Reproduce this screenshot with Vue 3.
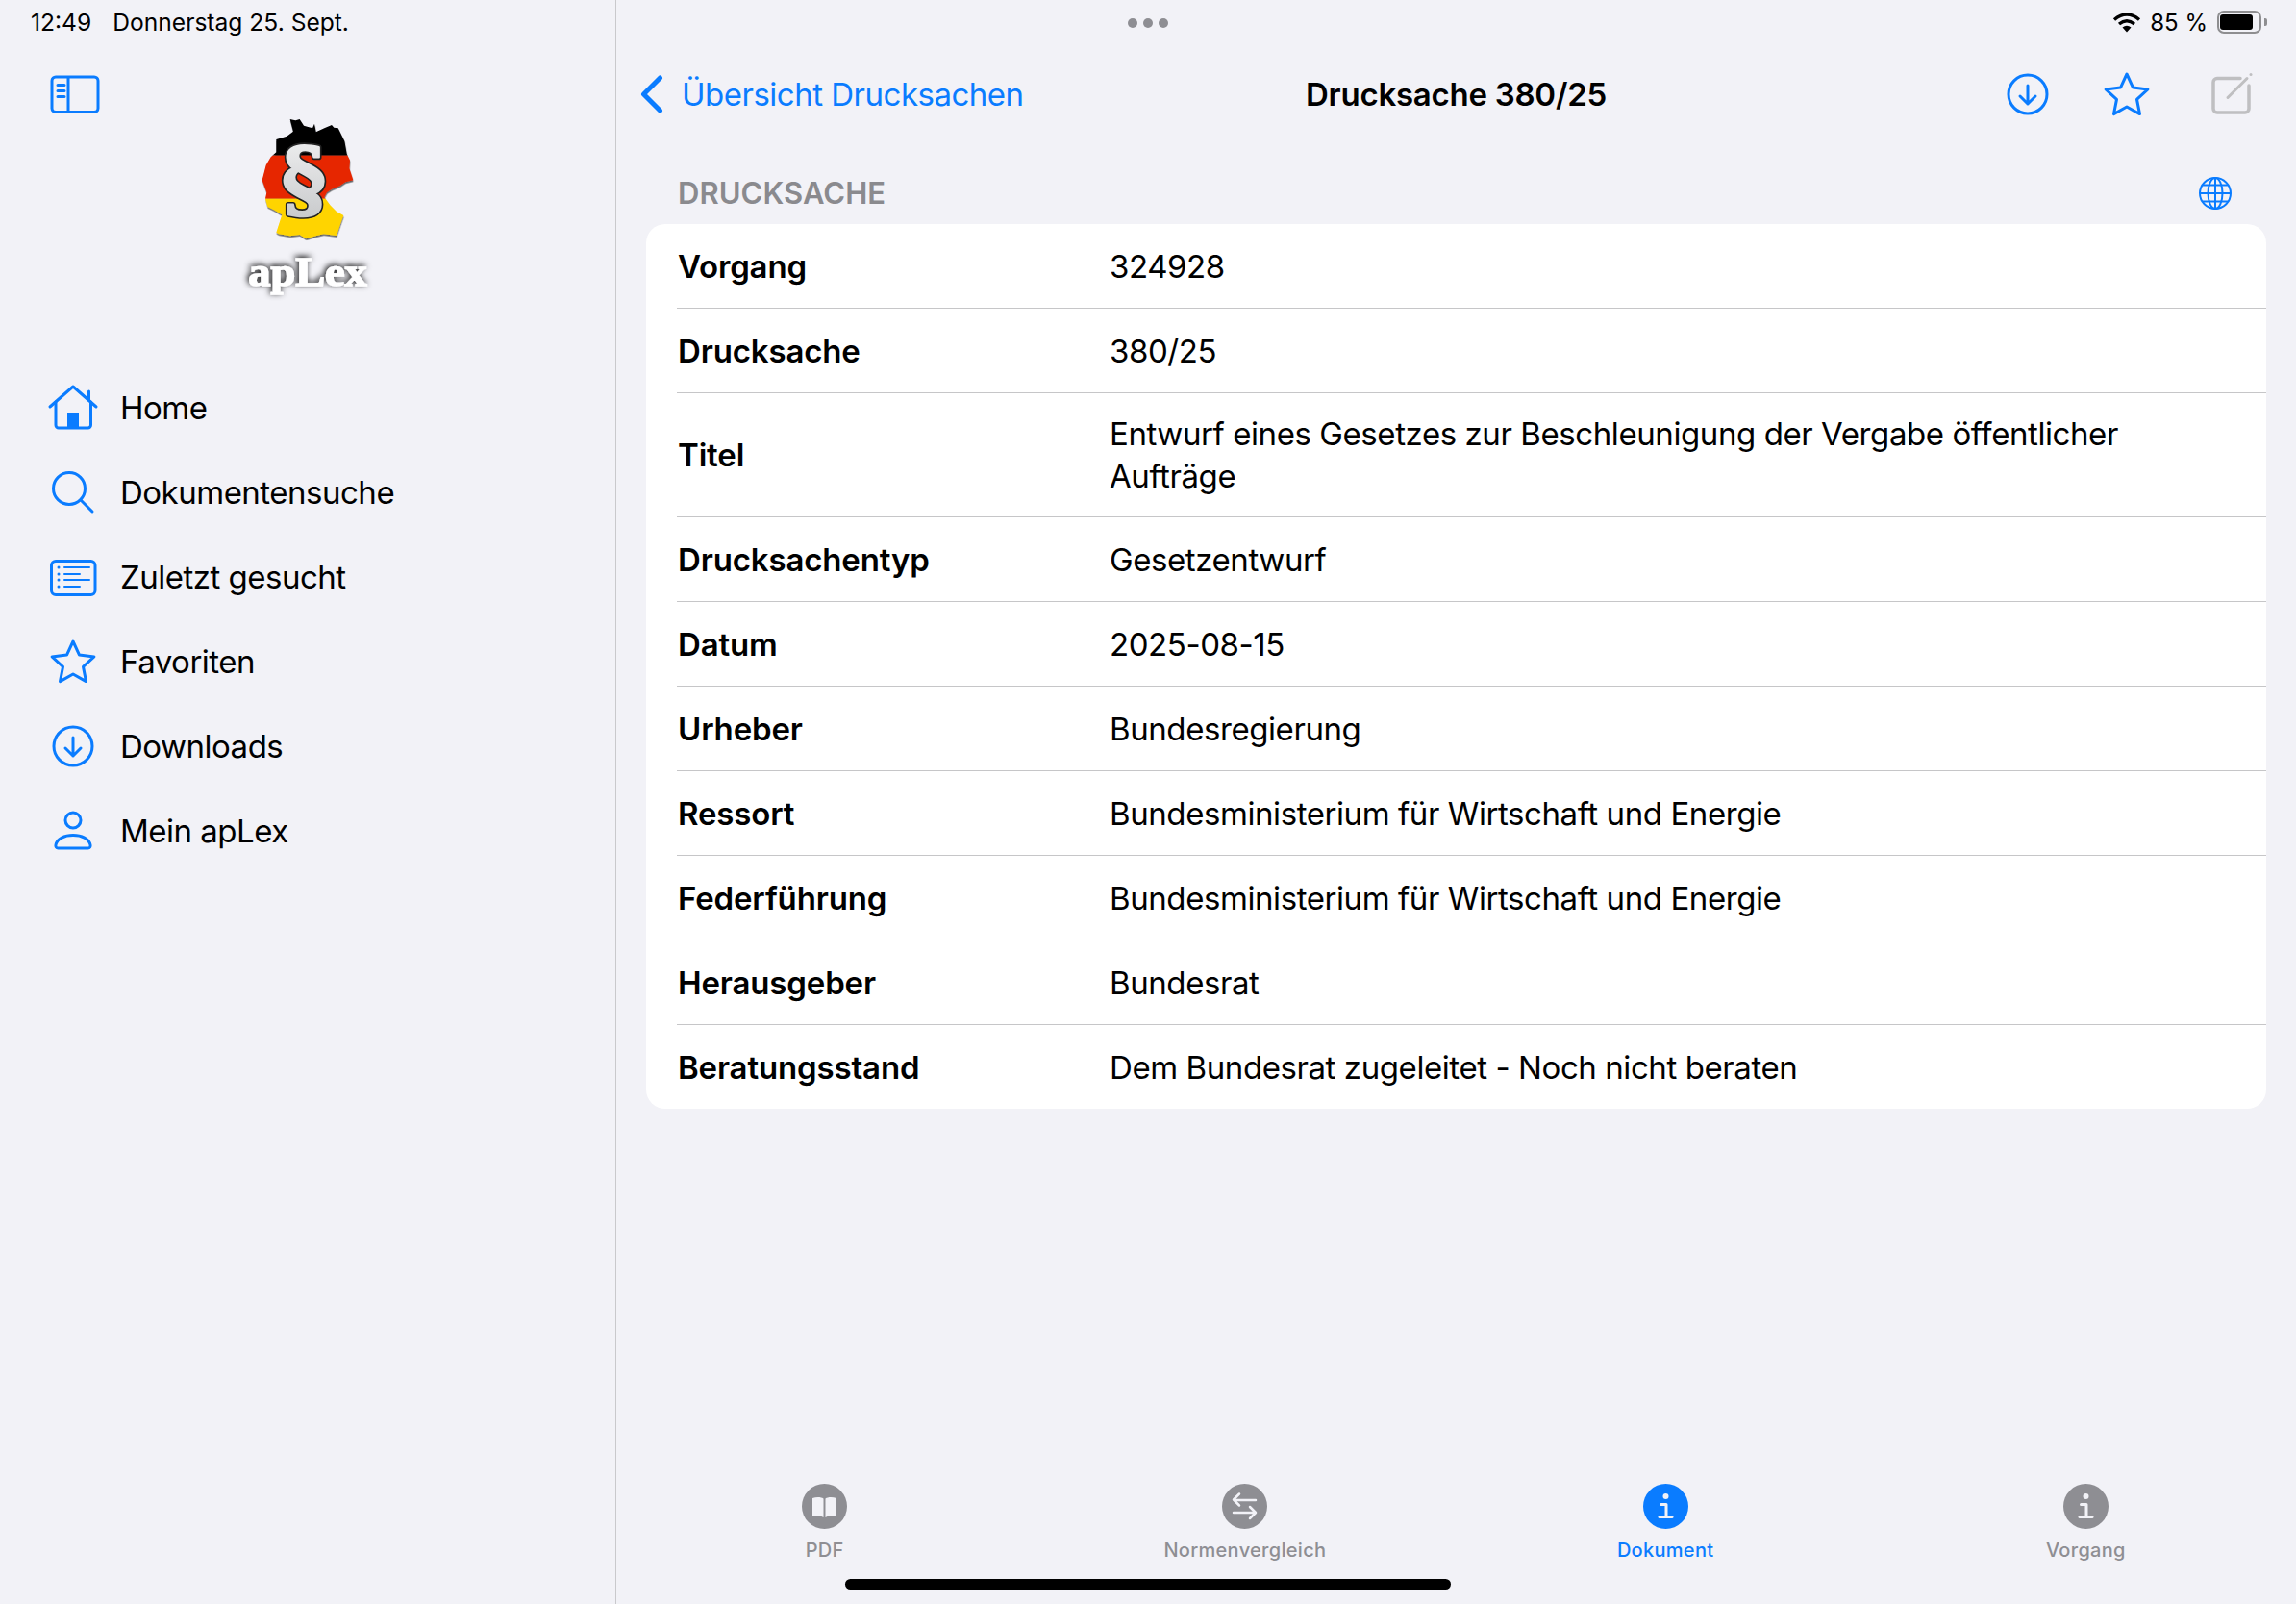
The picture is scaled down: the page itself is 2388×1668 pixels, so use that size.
<script setup>
const rows = [
  { label: 'Vorgang', value: '324928' },
  { label: 'Drucksache', value: '380/25' },
  { label: 'Titel', value: 'Entwurf eines Gesetzes zur Beschleunigung der Vergabe öffentlicher Aufträge' },
  { label: 'Drucksachentyp', value: 'Gesetzentwurf' },
  { label: 'Datum', value: '2025-08-15' },
  { label: 'Urheber', value: 'Bundesregierung' },
  { label: 'Ressort', value: 'Bundesministerium für Wirtschaft und Energie' },
  { label: 'Federführung', value: 'Bundesministerium für Wirtschaft und Energie' },
  { label: 'Herausgeber', value: 'Bundesrat' },
  { label: 'Beratungsstand', value: 'Dem Bundesrat zugeleitet - Noch nicht beraten' }
];

const menu = ['Home', 'Dokumentensuche', 'Zuletzt gesucht', 'Favoriten', 'Downloads', 'Mein apLex'];

const tabs = [
  { label: 'PDF', icon: 'book' },
  { label: 'Normenvergleich', icon: 'arrows' },
  { label: 'Dokument', icon: 'info', active: true },
  { label: 'Vorgang', icon: 'info' }
];

const germany = '215,72 232,76 245,72 258,92 285,100 291,86 296,112 322,100 345,90 352,98 365,100 385,140 392,180 402,200 400,225 412,262 388,268 370,280 345,290 330,300 322,315 340,340 360,360 382,372 372,400 360,435 320,430 295,436 265,445 245,432 215,436 180,430 172,425 190,370 165,355 145,345 138,320 142,300 128,262 140,215 155,190 172,175 172,135 205,125 225,110';
</script>

<template>
  <div class="page">
    <aside class="sidebar">
      <div class="status-left">
        <span>12:49</span>
        <span>Donnerstag 25. Sept.</span>
      </div>
      <div class="toggle-row">
        <svg class="toggle" width="52" height="41" viewBox="0 0 52 41" fill="none" stroke="#0a7cff" stroke-width="3">
          <rect x="2" y="2" width="48" height="36.5" rx="4" />
          <path d="M19 2V38.5" />
          <path d="M8 10.5h7M8 16.5h7M8 22.5h7" stroke-linecap="round" />
        </svg>
      </div>
      <svg class="logo" width="180" height="200" viewBox="0 60 540 600">
        <defs>
          <clipPath id="de"><polygon :points="germany" /></clipPath>
          <linearGradient id="silver" x1="0" y1="0" x2="0" y2="1">
            <stop offset="0" stop-color="#f2f2f3" />
            <stop offset="1" stop-color="#c4c6c8" />
          </linearGradient>
          <filter id="drop" x="-20%" y="-20%" width="140%" height="140%">
            <feDropShadow dx="1" dy="5" stdDeviation="2" flood-color="#000" flood-opacity="0.6" />
          </filter>
          <filter id="glow" x="-30%" y="-60%" width="160%" height="220%">
            <feDropShadow dx="-4" dy="-5" stdDeviation="10" flood-color="#000" flood-opacity="0.95" />
          </filter>
        </defs>
        <g filter="url(#drop)">
          <g clip-path="url(#de)">
            <rect x="100" y="60" width="340" height="125" fill="#000" />
            <rect x="100" y="185" width="340" height="135" fill="#e62600" />
            <rect x="100" y="320" width="340" height="130" fill="#ffd400" />
          </g>
        </g>
        <text x="258" y="350" text-anchor="middle" class="para" fill="#222" stroke="#222" stroke-width="17" stroke-linejoin="round">§</text>
        <text x="258" y="350" text-anchor="middle" class="para" fill="url(#silver)" stroke="url(#silver)" stroke-width="7" stroke-linejoin="round">§</text>
        <text x="270" y="592" text-anchor="middle" textLength="370" lengthAdjust="spacingAndGlyphs" class="brand" fill="#fff" stroke="#fff" stroke-width="4" filter="url(#glow)">apLex</text>
      </svg>

      <nav class="menu">
        <div v-for="(item, i) in menu" :key="item" class="menu-item">
          <svg width="60" height="60" viewBox="0 0 60 60" fill="none" stroke="#0a7cff" stroke-width="3" stroke-linecap="round" stroke-linejoin="round">
            <template v-if="i === 0">
              <path d="M6 29L30 8L54 29" />
              <path d="M46.5 22V13" />
              <path d="M12 24V48a3 3 0 0 0 3 3H45.5a3 3 0 0 0 3-3V24" />
              <rect x="24" y="35" width="12" height="16" fill="#0a7cff" stroke="none" />
            </template>
            <template v-else-if="i === 1">
              <circle cx="26" cy="26" r="16.5" />
              <path d="M38 38L50 50" />
            </template>
            <template v-else-if="i === 2">
              <rect x="7.5" y="13.5" width="45.5" height="35" rx="4.5" />
              <path d="M21 20H47M21 27H37M21 33H47M21 40H37" stroke-width="2" />
              <path d="M15 20v.1M15 27v.1M15 33v.1M15 40v.1" />
            </template>
            <template v-else-if="i === 3">
              <polygon points="30,9 36.5,23.1 51.9,24.9 40.5,35.4 43.5,50.6 30,43 16.5,50.6 19.5,35.4 8.1,24.9 23.5,23.1" />
            </template>
            <template v-else-if="i === 4">
              <circle cx="30" cy="30" r="20" />
              <path d="M30 21V40M22 32L30 40L38 32" />
            </template>
            <template v-else>
              <circle cx="30" cy="19" r="8" />
              <path d="M14.5 48C12.5 48 11.5 46.5 12 44.5C13.5 38 21 34.5 30 34.5C39 34.5 46.5 38 48 44.5C48.5 46.5 47.5 48 45.5 48Z" />
            </template>
          </svg>
          <span>{{ item }}</span>
        </div>
      </nav>
    </aside>

    <main class="content">
      <div class="status-right">
        <svg width="30" height="21" viewBox="0 0 30 21" fill="none" stroke="#000" stroke-width="3.4">
          <path d="M2 7.5Q15 -3.5 28 7.5" />
          <path d="M7 12Q15 5.5 23 12" />
          <path d="M10.5 15.5Q15 12 19.5 15.5L15 20.5Z" fill="#000" stroke="none" />
        </svg>
        <span>85 %</span>
        <div class="battery"><div class="battery-fill"></div></div>
        <div class="battery-nub"></div>
      </div>

      <header class="navbar">
        <div class="back">
          <svg width="24" height="40" viewBox="0 0 24 40" fill="none" stroke="#0a7cff" stroke-width="5" stroke-linecap="round" stroke-linejoin="round">
            <path d="M20.5 3L3.5 20L20.5 37" />
          </svg>
          <span>Übersicht Drucksachen</span>
        </div>
        <div class="nav-title">Drucksache 380/25</div>
        <div class="nav-actions">
          <svg width="60" height="60" viewBox="0 0 60 60" fill="none" stroke="#0a7cff" stroke-width="3" stroke-linecap="round" stroke-linejoin="round">
            <circle cx="30" cy="30" r="20" />
            <path d="M30 21V40M22 32L30 40L38 32" />
          </svg>
          <svg width="60" height="60" viewBox="0 0 60 60" fill="none" stroke="#0a7cff" stroke-width="3" stroke-linejoin="round">
            <polygon points="30,9 36.5,23.1 51.9,24.9 40.5,35.4 43.5,50.6 30,43 16.5,50.6 19.5,35.4 8.1,24.9 23.5,23.1" />
          </svg>
          <svg class="edit" width="60" height="60" viewBox="0 0 60 60" fill="none" stroke="#bfbfc1" stroke-width="3.5" stroke-linecap="round">
            <path d="M40 13.5H16a4 4 0 0 0-4 4V45a4 4 0 0 0 4 4H45a4 4 0 0 0 4-4V21" />
            <path d="M27 33.5L47 13.5" stroke-width="3" />
            <path d="M51 9.5v.1" stroke-width="3" />
          </svg>
        </div>
      </header>

      <div class="section-head">
        <span>DRUCKSACHE</span>
        <svg class="globe" width="36" height="36" viewBox="0 0 36 36" fill="none" stroke="#0a7cff" stroke-width="2">
          <circle cx="18" cy="18" r="16" />
          <ellipse cx="18" cy="18" rx="7.5" ry="16" />
          <path d="M18 2V34M2 18H34M5 9.5H31M5 26.5H31" />
        </svg>
      </div>

      <section class="card">
        <div v-for="row in rows" :key="row.label" class="row">
          <div class="row-label">{{ row.label }}</div>
          <div class="row-value">{{ row.value }}</div>
        </div>
      </section>

      <footer class="tabbar">
        <div v-for="tab in tabs" :key="tab.label" class="tab" :class="{ active: tab.active }">
          <svg class="tab-icon" width="47" height="47" viewBox="0 0 47 47">
            <circle cx="23.5" cy="23.5" r="23.5" class="tab-disc" />
            <g v-if="tab.icon === 'book'" fill="#f2f2f7">
              <path d="M22.5 15.5C20 13.5 15 13.5 11 15V33.5C15 32.5 19.5 32.5 22.5 35Z" />
              <path d="M24.5 15.5C27 13.5 32 13.5 36 15V33.5C32 32.5 27.5 32.5 24.5 35Z" />
            </g>
            <g v-else-if="tab.icon === 'arrows'" fill="none" stroke="#f2f2f7" stroke-width="2.5" stroke-linecap="round" stroke-linejoin="round">
              <path d="M35 17H12.5M18 10.5L12 16.5L18 22.5" />
              <path d="M12 30H34.5M29 24L35 30L29 36" />
            </g>
            <g v-else fill="none" stroke="#f2f2f7" stroke-width="3" stroke-linecap="round" stroke-linejoin="round">
              <circle cx="23.5" cy="13" r="3" fill="#f2f2f7" stroke="none" />
              <path d="M18.5 21.5H24V34" />
              <path d="M17 34.5H30" />
            </g>
          </svg>
          <span>{{ tab.label }}</span>
        </div>
      </footer>
    </main>

    <div class="dots"><i></i><i></i><i></i></div>
    <div class="home-indicator"></div>
  </div>
</template>

<style>
html, body { margin: 0; background: #f2f2f7; }
</style>

<style scoped>
.page {
  position: relative;
  width: 2388px;
  height: 1668px;
  display: flex;
  overflow: hidden;
  background: #f2f2f7;
  color: #000;
  font-family: Inter, "Noto Sans", sans-serif;
  font-size: 33px;
  letter-spacing: -0.4px;
}

/* sidebar */
.sidebar {
  width: 640px;
  flex: none;
  border-right: 1px solid #c9c9cc;
  display: flex;
  flex-direction: column;
}
.status-left {
  height: 46px;
  padding-left: 32px;
  display: flex;
  align-items: center;
  gap: 22px;
  font-size: 24.6px;
  letter-spacing: 0;
}
.toggle-row {
  height: 74px;
  padding: 32px 0 0 52px;
  box-sizing: border-box;
}
.toggle { display: block; }
.logo { display: block; margin-left: 230px; overflow: visible; }
.para { font: bold 265px "DejaVu Serif", serif; letter-spacing: 0; }
.brand { font: bold 128px "Liberation Serif", serif; letter-spacing: 0; }
.menu {
  margin-top: 60px;
  padding-left: 46px;
  display: flex;
  flex-direction: column;
  letter-spacing: -0.5px;
}
.menu-item {
  height: 88px;
  display: flex;
  align-items: center;
  gap: 19px;
}

/* main */
.content {
  flex: 1;
  display: flex;
  flex-direction: column;
  min-width: 0;
}
.status-right {
  height: 46px;
  padding-right: 30px;
  display: flex;
  align-items: center;
  justify-content: flex-end;
  font-size: 24px;
  letter-spacing: 0;
}
.status-right svg { margin-right: 9px; }
.battery {
  margin-left: 10px;
  width: 46px;
  height: 24px;
  box-sizing: border-box;
  border: 2px solid #8e8e90;
  border-radius: 7px;
  padding: 2px 1px;
}
.battery-fill { width: 34px; height: 100%; background: #000; border-radius: 3px; }
.battery-nub {
  margin-left: 3px;
  width: 3px;
  height: 8px;
  background: #8e8e90;
  border-radius: 0 2px 2px 0;
}
.navbar {
  height: 104px;
  display: grid;
  grid-template-columns: 1fr auto 1fr;
  align-items: center;
}
.back {
  display: flex;
  align-items: center;
  gap: 19px;
  padding-left: 25px;
  color: #0a7cff;
  letter-spacing: -0.5px;
}
.nav-title { font-weight: 600; letter-spacing: -0.25px; }
.nav-actions {
  display: flex;
  justify-content: flex-end;
  align-items: center;
  gap: 43px;
  padding-right: 38px;
}
.edit { margin-left: 5px; }
.section-head {
  height: 83px;
  padding: 17px 66px 0 64px;
  box-sizing: border-box;
  display: flex;
  align-items: center;
  justify-content: space-between;
  color: #8a8a8e;
  font-size: 31px;
  font-weight: 600;
  letter-spacing: 0.05px;
}
.globe { margin-top: 2px; }
.card {
  margin: 0 31px 0 31px;
  background: #fff;
  border-radius: 20px;
  padding-left: 32px;
}
.row {
  min-height: 88px;
  padding: 20px 0;
  box-sizing: border-box;
  display: grid;
  grid-template-columns: 450px 1fr;
  align-items: center;
  border-bottom: 1px solid #c6c6c8;
  line-height: 44px;
}
.row:last-child { border-bottom: 0; min-height: 87px; }
.row-label { font-weight: 600; letter-spacing: -0.15px; padding-left: 1px; }
.row-value { padding-right: 120px; letter-spacing: -0.42px; }

/* tabs */
.tabbar {
  margin: auto 0 0 -2px;
  height: 125px;
  display: grid;
  grid-template-columns: repeat(4, 1fr);
  box-sizing: border-box;
  color: #8e8e93;
  font-size: 20px;
  font-weight: 500;
  letter-spacing: 0.3px;
}
.tab {
  display: flex;
  flex-direction: column;
  align-items: center;
  gap: 10px;
}
.tab-icon { display: block; }
.tab-disc { fill: #8e8e93; }
.tab.active { color: #0a7cff; }
.tab.active .tab-disc { fill: #0a7cff; }

/* overlays */
.dots {
  position: absolute;
  top: 19px;
  left: 1173px;
  width: 42px;
  display: flex;
  justify-content: space-between;
}
.dots i {
  width: 10px;
  height: 10px;
  border-radius: 50%;
  background: #8e8e93;
}
.home-indicator {
  position: absolute;
  left: 879px;
  top: 1642px;
  width: 630px;
  height: 11px;
  border-radius: 6px;
  background: #000;
}
</style>
